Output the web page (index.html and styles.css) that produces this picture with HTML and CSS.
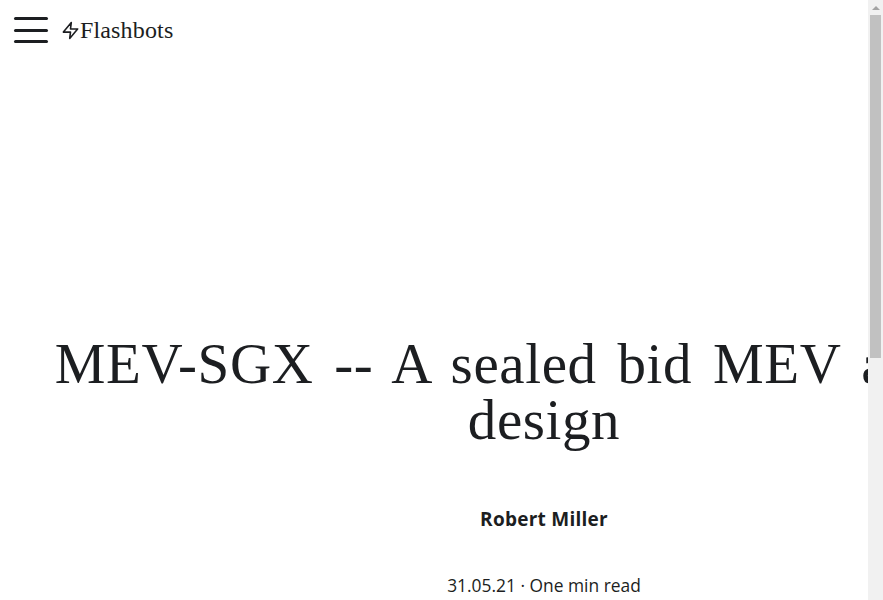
FILE: index.html
```html
<!DOCTYPE html>
<html lang="en">
<head>
    <meta charset="UTF-8">
    <meta name="viewport" content="width=device-width, initial-scale=1.0">
    <title>MEV-SGX -- A sealed bid MEV auction design</title>
    <link rel="stylesheet" href="styles.css">
</head>
<body>
<div class="page">
    <div class="content">
        <header class="topbar">
            <button class="menu-button" type="button" aria-label="Menu">
                <span class="menu-line"></span>
                <span class="menu-line"></span>
                <span class="menu-line"></span>
            </button>
            <a class="brand" href="#">
                <svg class="brand-icon" viewBox="0 0 24 24" fill="none" stroke="currentColor" stroke-width="2" stroke-linecap="round" stroke-linejoin="round">
                    <polygon points="13 2 3 14 12 14 11 22 21 10 12 10 13 2"></polygon>
                </svg>
                <span>Flashbots</span>
            </a>
        </header>

        <main class="article">
            <h1 class="article-title">MEV-SGX -- A sealed bid MEV auction design</h1>
            <p class="article-author">Robert Miller</p>
            <p class="article-meta">31.05.21 · One min read</p>
        </main>
    </div>

    <div class="scrollbar">
        <div class="scrollbar-arrow"></div>
        <div class="scrollbar-thumb"></div>
    </div>
</div>
</body>
</html>
```

FILE: styles.css
```css
body {
    margin: 0;
    background-color: #fff;
    color: #1c1e21;
    font-family: "Open Sans", sans-serif;
}

.page {
    display: flex;
    height: 100vh;
    overflow: hidden;
}

.content {
    flex: 1;
    min-width: 0;
    overflow: hidden;
}

.topbar {
    display: flex;
    align-items: center;
    gap: 13px;
    height: 60px;
    padding-left: 14px;
}

.menu-button {
    display: flex;
    flex-direction: column;
    gap: 8.5px;
    width: 34px;
    padding: 0;
    border: none;
    background: none;
}

.menu-line {
    display: block;
    height: 3px;
    border-radius: 2px;
    background-color: #1c1e21;
}

.brand {
    display: flex;
    align-items: center;
    color: #1c1e21;
    font-family: "Liberation Serif", serif;
    font-size: 24px;
    letter-spacing: 0.15px;
    text-decoration: none;
}

.brand-icon {
    width: 19px;
    height: 19px;
}

.article {
    width: 1088px;
    padding-top: 276px;
    text-align: center;
}

.article-title {
    margin: 0 40px;
    font-family: "Liberation Serif", serif;
    font-size: 57px;
    font-weight: 400;
    letter-spacing: 0.6px;
    word-spacing: 6px;
    line-height: 56px;
}

.article-author {
    margin: 59px 0 0;
    font-size: 19px;
    font-weight: 700;
    letter-spacing: 0.25px;
    line-height: 24px;
}

.article-meta {
    margin: 42px 0 0;
    font-size: 17.4px;
    line-height: 24px;
}

.scrollbar {
    flex: none;
    width: 15px;
    background-color: #f1f1f1;
}

.scrollbar-arrow {
    width: 0;
    height: 0;
    margin: 6px auto 5px;
    border-left: 4px solid transparent;
    border-right: 4px solid transparent;
    border-bottom: 4px solid #a3a3a3;
}

.scrollbar-thumb {
    width: 11px;
    height: 343px;
    margin: 0 auto;
    background-color: #c1c1c1;
}
```
